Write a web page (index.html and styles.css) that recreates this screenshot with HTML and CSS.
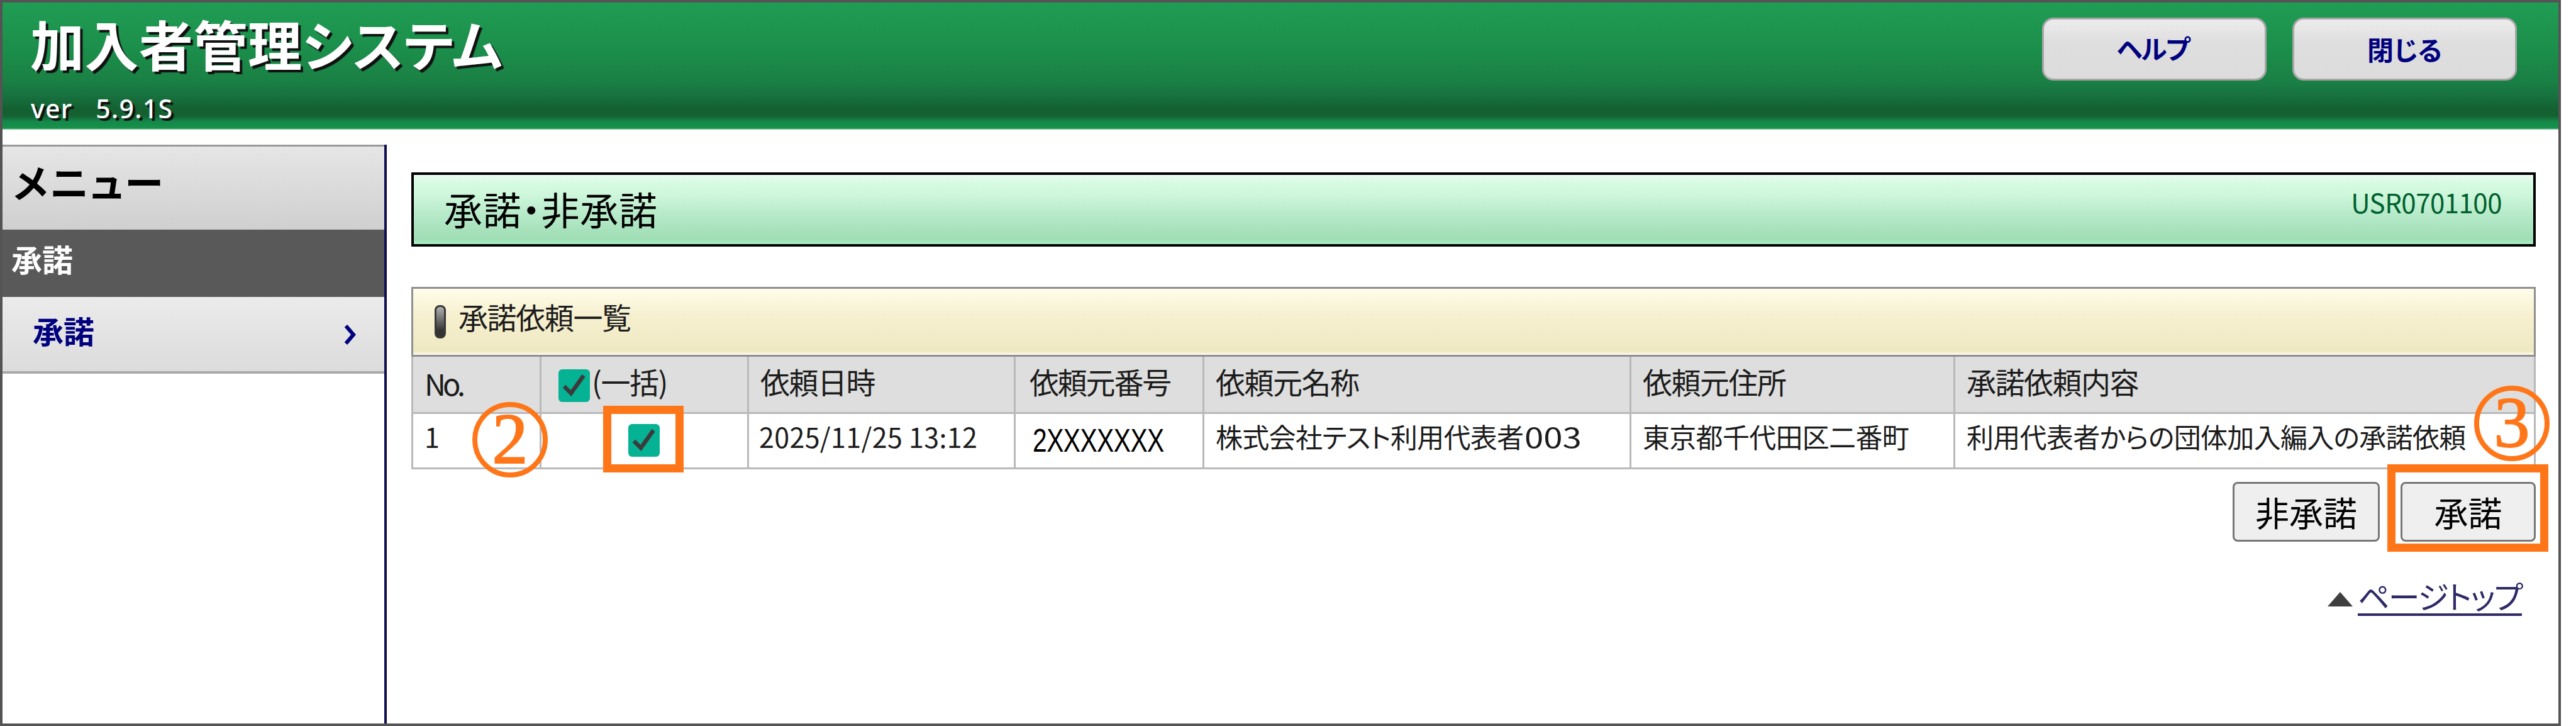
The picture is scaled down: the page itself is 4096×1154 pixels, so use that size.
FILE: index.html
```html
<!DOCTYPE html>
<html lang="ja">
<head>
<meta charset="utf-8">
<title>加入者管理システム</title>
<link rel="stylesheet" href="styles.css">
</head>
<body>
<div class="window">
  <header class="header">
    <div class="brand">
      <h1 class="brand-title">加入者管理システム</h1>
      <p class="version">ver <span>5.9.1S</span></p>
    </div>
    <div class="header-buttons">
      <button class="nav-button help">ヘルプ</button>
      <button class="nav-button close">閉じる</button>
    </div>
  </header>
  <div class="body">
    <nav class="sidebar">
      <div class="menu-title"><span>メニュー</span></div>
      <div class="menu-group"><span>承諾</span></div>
      <a class="menu-item"><span>承諾</span>
        <svg class="chevron" viewBox="0 0 20 32"><path d="M3 2 L15 16 L3 30" fill="none" stroke="#00007f" stroke-width="6"/></svg>
      </a>
    </nav>
    <main class="main">
      <div class="page-title">
        <h2>承諾<span class="dot">・</span>非承諾</h2>
        <span class="page-id">USR0701100</span>
      </div>
      <section class="list">
        <div class="list-title"><i class="pill"></i><h3>承諾依頼一覧</h3></div>
        <div class="grid">
          <div class="cell head no">No.</div>
          <div class="cell head check-all"><svg class="check" viewBox="0 0 50 52"><rect width="50" height="52" rx="6" fill="#05b294"/><path d="M9 27 L20 38 L40 10" fill="none" stroke="#3b3b3b" stroke-width="6.5"/></svg><span>(一括)</span></div>
          <div class="cell head">依頼日時</div>
          <div class="cell head number">依頼元番号</div>
          <div class="cell head">依頼元名称</div>
          <div class="cell head">依頼元住所</div>
          <div class="cell head">承諾依頼内容</div>
          <div class="cell no">1</div>
          <div class="cell check-one"><svg class="check" viewBox="0 0 50 52"><rect width="50" height="52" rx="6" fill="#05b294"/><path d="M9 27 L20 38 L40 10" fill="none" stroke="#3b3b3b" stroke-width="6.5"/></svg></div>
          <div class="cell date">2025/11/25 13:12</div>
          <div class="cell number"><span class="masked">2XXXXXXX</span></div>
          <div class="cell name">株式会社テスト利用代表者<span class="wide">003</span></div>
          <div class="cell address">東京都千代田区二番町</div>
          <div class="cell detail">利用代表者からの団体加入編入の承諾依頼</div>
        </div>
      </section>
      <div class="actions">
        <button class="action reject">非承諾</button>
        <button class="action accept">承諾</button>
      </div>
      <div class="page-top"><svg class="triangle" viewBox="0 0 40 23"><path d="M20 0 L40 23 H0 Z" fill="#3f3f3f"/></svg><a>ページトップ</a></div>
    </main>
  </div>
  <div class="highlight highlight-check"></div>
  <div class="highlight highlight-accept"></div>
  <div class="step step-two"><span>2</span></div>
  <div class="step step-three"><span>3</span></div>
</div>
</body>
</html>
```
FILE: styles.css
```css
* { box-sizing: border-box; }

body {
  margin: 0;
  background: #fff;
  color: #1c1c1c;
  font-family: "Noto Sans CJK JP", sans-serif;
  font-feature-settings: "palt";
}

h1, h2, h3, p { margin: 0; font-weight: 400; }

.window {
  position: relative;
  width: 4072px;
  height: 1154px;
  border: 4px solid #545454;
  overflow: hidden;
}

.header {
  display: flex;
  justify-content: space-between;
  height: 202px;
  padding: 0 66px 0 44px;
  background: linear-gradient(#209d54 0, #1b8d4a 80px, #1a8044 125px, #177340 146px, #146030 170px, #146031 180px, #16884a 189px, #16924a 200px, #b0dfc5 202px);
}

.brand { color: #fff; text-shadow: 4px 4px 1px #111; }
.brand-title {
  height: 138px;
  line-height: 130px;
  font-size: 86px;
  font-weight: 700;
  letter-spacing: 0.5px;
  white-space: nowrap;
}
.version {
  line-height: 60px;
  padding-left: 1px;
  font-family: "Noto Sans", sans-serif;
  font-size: 41px;
  font-weight: 500;
  letter-spacing: 1.3px;
}
.version span { margin-left: 25px; }

.header-buttons { display: flex; gap: 41px; padding-top: 24px; }
.nav-button {
  width: 357px;
  height: 100px;
  padding: 0;
  border: 3px solid #aaa5a8;
  border-radius: 18px;
  background: linear-gradient(#ececec, #dedede 40%, #dcdcdc);
  color: #00007f;
  font: 700 42px/80px "Noto Sans CJK JP", sans-serif;
  font-feature-settings: "palt";
}
.help { padding-right: 5px; padding-bottom: 4px; letter-spacing: -2px; }

.body { display: flex; height: 944px; padding-top: 24px; }

.sidebar { width: 611px; border-right: 4px solid #100c52; }
.menu-title {
  height: 135px;
  padding-left: 17px;
  border-top: 3px solid #999;
  background: linear-gradient(#e6e6e6, #cfcfcf);
  color: #000;
  font-size: 62px;
  font-weight: 700;
  line-height: 110px;
  letter-spacing: 3px;
}
.menu-group {
  height: 107px;
  padding-left: 14px;
  background: #595959;
  color: #fff;
  font-size: 49px;
  font-weight: 700;
  line-height: 91px;
}
.menu-item {
  display: flex;
  justify-content: space-between;
  height: 122px;
  padding: 0 44px 0 48px;
  border-bottom: 4px solid #aaa;
  background: linear-gradient(#ebebeb, #dcdcdc);
  color: #00007f;
  font-size: 49px;
  font-weight: 700;
  line-height: 106px;
}
.chevron { width: 20px; height: 32px; margin-top: 44px; }

.main { width: 3378px; margin-left: 39px; }

.page-title {
  display: flex;
  justify-content: space-between;
  height: 118px;
  margin-top: 44px;
  padding: 0 50px 0 48px;
  border: 4px solid #000;
  background: linear-gradient(#ebf9f1 0, #d4fbe0 14px, #cff7dc 30px, #b5e9c8 65px, #9fddb5 102px, #a8efc2 110px);
  color: #000;
}
.page-title h2 { font-size: 61px; line-height: 107px; letter-spacing: 0.7px; }
.page-id { color: #00602e; font-size: 42px; line-height: 86px; letter-spacing: -0.5px; }

.list { margin-top: 64px; }
.list-title {
  display: flex;
  height: 111px;
  padding-left: 34px;
  border: 3px solid #8f8f8f;
  background: linear-gradient(#fffdea, #f6f0d0 40%, #eee8c2 95%, #fffff0);
}
.pill {
  width: 18px;
  height: 53px;
  margin-top: 26px;
  border-radius: 8px;
  border: 3px solid #383838;
  background: linear-gradient(#b0b0b0, #333 80%);
}
.list-title h3 { margin-left: 20px; font-size: 47px; line-height: 87px; letter-spacing: -1.4px; }

.grid {
  display: grid;
  grid-template-columns: 204px 330px 424px 300px 679px 515px 923px;
  grid-template-rows: 91px 88px;
  border-left: 3px solid #b9b9b9;
}
.cell {
  padding-left: 18px;
  border-right: 3px solid #b9b9b9;
  border-bottom: 3px solid #b9b9b9;
  font-size: 43px;
  line-height: 70px;
  letter-spacing: -0.7px;
  white-space: nowrap;
}
.cell.head { background: #dedede; font-size: 47px; line-height: 78px; letter-spacing: -1.5px; }
.cell.no { padding-left: 18px; }
.cell.head.no { padding-top: 3px; letter-spacing: -5px; }
.cell.number { padding-left: 22px; }
.cell.head.number { letter-spacing: -2.2px; }
.cell.date { padding-left: 16px; letter-spacing: 0.35px; }
.check { width: 50px; height: 52px; }
.check-all { display: flex; padding-left: 27px; }
.check-all .check { margin-top: 20px; }
.check-all span { margin-left: 3px; }
.check-one { display: flex; justify-content: center; padding: 16px 2px 0 0; }
.masked {
  display: block;
  margin-left: 5px;
  transform: scaleX(0.8);
  transform-origin: left;
  color: #000;
  font: 51px/86px "Liberation Sans", sans-serif;
}
.wide {
  display: inline-block;
  margin-left: 2px;
  transform: scaleX(1.27);
  transform-origin: left;
  letter-spacing: 0;
}

.actions { display: flex; justify-content: flex-end; gap: 33px; margin-top: 20px; }
.action {
  height: 95px;
  padding: 0;
  border: 3px solid #777;
  border-radius: 8px;
  background: #efefef;
  color: #000;
  font: 400 54px/86px "Noto Sans CJK JP", sans-serif;
}
.reject { width: 234px; }
.accept { width: 215px; }

.page-top { display: flex; justify-content: flex-end; gap: 8px; margin-top: 50px; padding-right: 22px; }
.triangle { width: 40px; height: 23px; margin-top: 30px; }
.page-top a {
  height: 68px;
  border-bottom: 4px solid #2d2a66;
  color: #2d2a66;
  font-size: 50px;
  line-height: 70px;
  letter-spacing: -1.8px;
}

/* Callouts laid over the screen */
.highlight { position: absolute; border: 13px solid #ff7619; }
.highlight-check { left: 955px; top: 641px; width: 128px; height: 106px; }
.highlight-accept { left: 3792px; top: 734px; width: 256px; height: 139px; }
.step {
  position: absolute;
  width: 120px;
  height: 120px;
  border: 8px solid #ff7619;
  border-radius: 50%;
  color: #ff7619;
  font: 114px/102px "Liberation Serif", serif;
  text-align: center;
  -webkit-text-stroke: 2px #ff7619;
}
.step-two { left: 747px; top: 635px; }
.step-three { left: 3930px; top: 609px; }
```
